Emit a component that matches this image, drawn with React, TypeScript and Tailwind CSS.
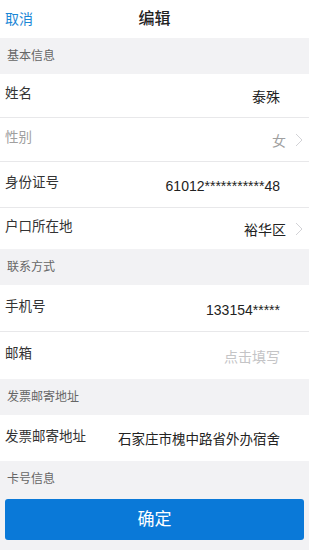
import React from "react";

const FONT = { fontFamily: '"Liberation Sans", "Noto Sans CJK SC", sans-serif' };

function Chevron() {
  return (
    <svg width="8" height="14" viewBox="0 0 8 14" className="ml-[9px] mr-[6px]">
      <path d="M1 1 L7 7 L1 13" fill="none" stroke="#d2d2d6" strokeWidth="1" />
    </svg>
  );
}

function Section({ title }: { title: string }) {
  return (
    <div className="h-[36px] flex items-center pl-[7px] text-[12px] text-[#666]">{title}</div>
  );
}

function Row({
  label,
  value,
  h,
  labelColor = "text-[#333]",
  valueColor = "text-[#222]",
  chevron = false,
  border = true,
  valueSize = "text-[14px]",
}: {
  label: string;
  value: string;
  h: string;
  labelColor?: string;
  valueColor?: string;
  chevron?: boolean;
  border?: boolean;
  valueSize?: string;
}) {
  return (
    <div className={`bg-white flex items-center pl-[5px] ${h} ${border ? "border-b border-[#e8e8ea]" : ""}`}>
      <div className={`text-[13.5px] ${labelColor} mb-[2px]`}>{label}</div>
      <div className="flex-1" />
      <div className={`${valueSize} ${valueColor} pt-[4px]`}>{value}</div>
      {chevron ? <Chevron /> : <div className="w-[29px] shrink-0" />}
    </div>
  );
}

export default function App() {
  return (
    <div className="w-[309px] min-h-[550px] bg-[#f2f2f4]" style={FONT}>
      <div className="h-[38px] bg-white relative flex items-center">
        <span className="pl-[5px] text-[14px] text-[#1b87d6]">取消</span>
        <span className="absolute left-0 right-0 text-center text-[16px] font-medium text-[#222] pointer-events-none">编辑</span>
      </div>
      <Section title="基本信息" />
      <Row label="姓名" value="泰殊" h="h-[44px]" />
      <Row label="性别" value="女" h="h-[44px]" labelColor="text-[#a0a0a0]" valueColor="text-[#a0a0a0]" chevron />
      <Row label="身份证号" value="61012***********48" h="h-[46px]" />
      <Row label="户口所在地" value="裕华区" h="h-[41px]" chevron border={false} />
      <Section title="联系方式" />
      <Row label="手机号" value="133154*****" h="h-[47px]" />
      <Row label="邮箱" value="点击填写" h="h-[47px]" valueColor="text-[#c4c4c6]" border={false} />
      <Section title="发票邮寄地址" />
      <div className="bg-white flex items-center pl-[5px] h-[46px]">
        <div className="text-[13.5px] text-[#333] mb-[2px]">发票邮寄地址</div>
        <div className="flex-1" />
        <div className="text-[13.5px] text-[#222] pt-[4px]">石家庄市槐中路省外办宿舍</div>
        <div className="w-[29px] shrink-0" />
      </div>
      <Section title="卡号信息" />
      <div className="px-[5px] pt-[2px] pb-[10px]">
        <button className="w-full h-[41px] rounded-[3px] bg-[#0a79d8] text-white text-[17px] flex items-center justify-center">
          确定
        </button>
      </div>
    </div>
  );
}
